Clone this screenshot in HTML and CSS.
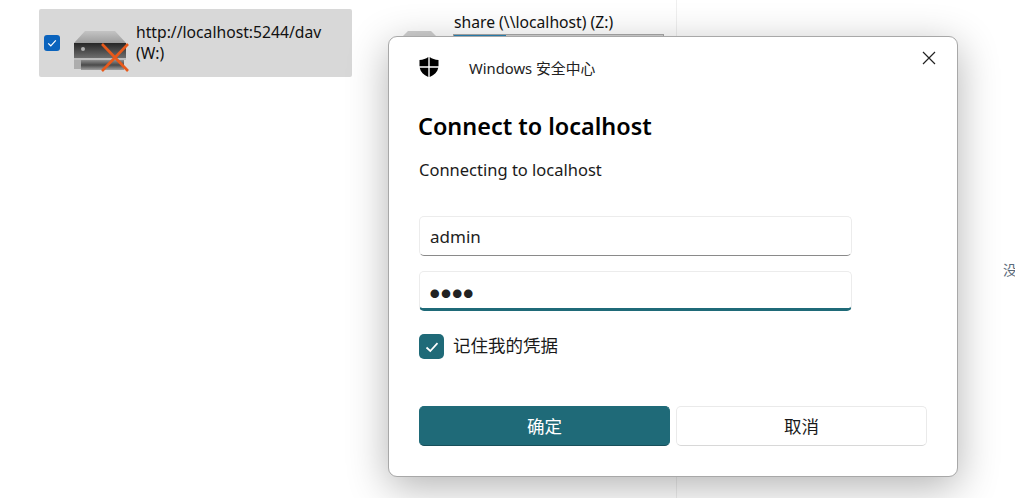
FILE: index.html
```html
<!DOCTYPE html>
<html lang="zh-CN">
<head>
    <meta charset="UTF-8">
    <title>Windows 安全中心</title>
    <link rel="stylesheet" href="styles.css">
</head>
<body>
    <div class="drives">
        <div class="drive selected">
            <span class="drive-check">
                <svg width="12" height="12" viewBox="0 0 12 12"><path d="M2.2 6.4 4.8 8.8 9.8 3.4" fill="none" stroke="#fff" stroke-width="1.2"/></svg>
            </span>
            <svg class="drive-icon" width="56" height="41" viewBox="0 0 56 41">
                <defs>
                    <linearGradient id="top" x1="0" y1="0" x2="0" y2="1"><stop offset="0" stop-color="#c4c4c4"/><stop offset="1" stop-color="#9c9c9c"/></linearGradient>
                    <linearGradient id="front" x1="0" y1="0" x2="0" y2="1"><stop offset="0" stop-color="#262626"/><stop offset="1" stop-color="#6e6e6e"/></linearGradient>
                    <linearGradient id="base" x1="0" y1="0" x2="0" y2="1"><stop offset="0" stop-color="#8c8c8c"/><stop offset="0.5" stop-color="#4a4a4a"/><stop offset="1" stop-color="#a0a0a0"/></linearGradient>
                </defs>
                <path d="M1 12 12 0H42L53 12Z" fill="url(#top)"/>
                <rect x="1" y="12" width="52" height="15" fill="url(#front)"/>
                <rect x="1" y="27" width="52" height="2" fill="#bdbdbd"/>
                <rect x="1" y="29" width="7" height="9" fill="#adadad"/>
                <rect x="8" y="29" width="43" height="10" fill="url(#base)"/>
                <circle cx="10" cy="18" r="2" fill="#b0b0b0"/>
                <path d="M29 13 55 40M55 13 29 40" stroke="#e8591a" stroke-width="2.6"/>
            </svg>
            <div class="drive-name">http://localhost:5244/dav<br>(W:)</div>
        </div>
        <div class="drive">
            <svg class="drive-icon-back" width="44" height="10" viewBox="0 0 44 10"><path d="M0 10 9 1H32L41 10Z" fill="#d0d0d0"/></svg>
            <div class="drive-info">
                <div class="drive-name">share (\\localhost) (Z:)</div>
                <div class="usage"><div class="usage-fill"></div></div>
            </div>
        </div>
    </div>
    <div class="divider"></div>
    <div class="empty-note">没</div>

    <div class="dialog">
        <div class="dialog-head">
            <svg class="shield" width="20" height="20" viewBox="0 0 20 20"><path d="M9.3 0C7 1.7 4 2.8 0.5 3V9.3H9.3ZM10.7 0V9.3H19.5V3C16 2.8 13 1.7 10.7 0ZM0.7 10.7C1.6 15 4.6 18 9.3 20V10.7ZM10.7 10.7V20C15.4 18 18.4 15 19.3 10.7Z" fill="#000"/></svg>
            <span class="app-name">Windows 安全中心</span>
            <svg class="close" width="14" height="14" viewBox="0 0 14 14"><path d="M1 1 13 13M13 1 1 13" stroke="#222" stroke-width="1.2"/></svg>
        </div>
        <h1>Connect to localhost</h1>
        <p class="subtitle">Connecting to localhost</p>
        <div class="field">admin</div>
        <div class="field active">●●●●</div>
        <div class="remember">
            <span class="check">
                <svg width="16" height="16" viewBox="0 0 16 16"><path d="M2.5 8.5 6.3 12 13.5 4.2" fill="none" stroke="#fff" stroke-width="1.7"/></svg>
            </span>
            <span class="remember-label">记住我的凭据</span>
        </div>
        <div class="buttons">
            <button class="primary">确定</button>
            <button>取消</button>
        </div>
    </div>
</body>
</html>
```

FILE: styles.css
```css
body {
    margin: 0;
    height: 498px;
    overflow: hidden;
    position: relative;
    background: #fff;
    font-family: "Noto Sans", "Noto Sans CJK SC", sans-serif;
    color: #1a1a1a;
}
.drives {
    display: flex;
    gap: 44px;
    padding: 9px 0 0 39px;
}
.drive {
    width: 313px;
    height: 68px;
    flex-shrink: 0;
    display: flex;
    border-radius: 2px;
    font-size: 15.7px;
    line-height: 21px;
}
.drive.selected {
    align-items: center;
    background: #d8d8d8;
}
.drive-check {
    width: 16px;
    height: 16px;
    margin-left: 5px;
    border-radius: 3px;
    background: #0a63bd;
    display: flex;
    align-items: center;
    justify-content: center;
}
.drive-icon {
    align-self: flex-start;
    margin: 22px 0 0 13px;
}
.drive-name {
    margin-left: 7px;
    color: #111;
    white-space: nowrap;
}
.drive-icon-back {
    margin: 21px 0 0 3px;
}
.drive-info {
    margin-left: 11px;
    margin-top: 3px;
}
.drive-info .drive-name {
    margin-left: 0;
}
.usage {
    width: 209px;
    height: 5px;
    margin: 1px 0 0 -1px;
    border: 1px solid #a9a9a9;
    background: #d6d6d6;
}
.usage-fill {
    width: 52px;
    height: 5px;
    background: #2a86b8;
}
.divider {
    position: absolute;
    left: 676px;
    top: 0;
    bottom: 0;
    border-left: 1px solid #efefef;
}
.empty-note {
    position: absolute;
    left: 1003px;
    top: 260px;
    font-size: 14px;
    line-height: 20px;
    color: #5b6b7b;
}
.dialog {
    position: absolute;
    left: 388px;
    top: 36px;
    width: 570px;
    height: 441px;
    box-sizing: border-box;
    padding: 0 30px;
    background: #fff;
    border: 1px solid #a8a8a8;
    border-radius: 9px;
    box-shadow: 0 10px 40px rgba(0, 0, 0, 0.3);
}
.dialog-head {
    display: flex;
    align-items: center;
    height: 20px;
    margin-top: 20px;
}
.shield {
    flex-shrink: 0;
}
.app-name {
    margin-left: 30px;
    font-size: 14.8px;
    color: #222;
}
.close {
    align-self: flex-start;
    margin: -6px -9px 0 auto;
}
h1 {
    margin: 32px 0 0 -1px;
    font-size: 23.4px;
    line-height: 34px;
    font-weight: 600;
    color: #000;
}
.subtitle {
    margin: 15px 0 0;
    font-size: 16.5px;
    line-height: 24px;
    color: #1a1a1a;
}
.field {
    width: 433px;
    height: 40px;
    box-sizing: border-box;
    margin-top: 15px;
    padding-left: 10px;
    border: 1px solid #ececec;
    border-bottom: 1px solid #8a8a8a;
    border-radius: 5px;
    font-size: 17px;
    line-height: 39px;
    color: #222;
}
.subtitle + .field {
    margin-top: 34px;
}
.field.active {
    border-bottom: 3px solid #1f6a78;
    font-size: 9.5px;
    line-height: 44px;
    letter-spacing: 1.7px;
}
.remember {
    display: flex;
    align-items: center;
    gap: 9px;
    margin-top: 23px;
    font-size: 17.5px;
    line-height: 25px;
}
.remember-label {
    margin-top: -2px;
}
.check {
    width: 25px;
    height: 25px;
    border-radius: 5px;
    background: #1f6a78;
    display: flex;
    align-items: center;
    justify-content: center;
}
.buttons {
    display: flex;
    gap: 6px;
    margin-top: 47px;
}
button {
    width: 251px;
    height: 40px;
    padding: 0 0 2px;
    border: 1px solid #eaeaea;
    border-bottom-color: #d8d8d8;
    border-radius: 5px;
    background: #fff;
    font-family: inherit;
    font-size: 17.5px;
    color: #1a1a1a;
}
button.primary {
    background: #1f6a78;
    border-color: #1f6a78;
    border-bottom-color: #174f5a;
    color: #fff;
}
```
